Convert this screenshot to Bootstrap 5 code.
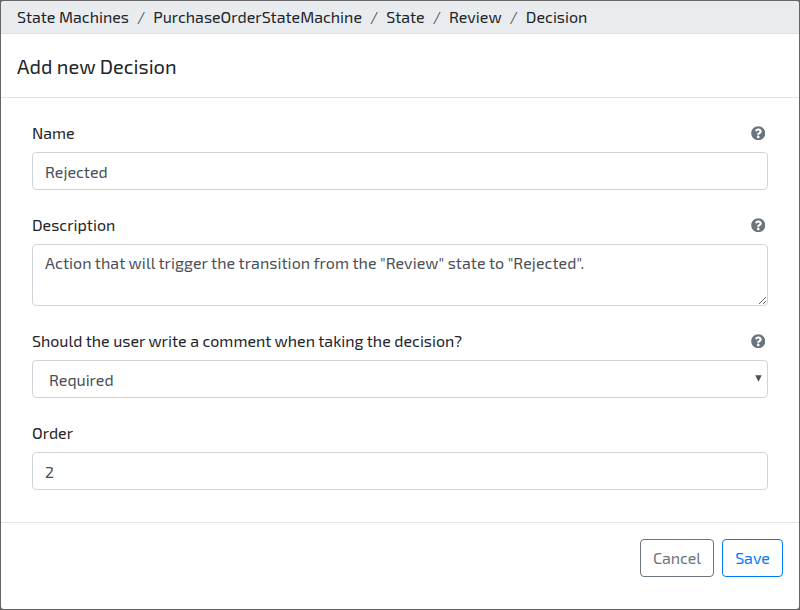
<!DOCTYPE html>
<html lang="en">
<head>
<meta charset="utf-8">
<meta name="viewport" content="width=device-width, initial-scale=1">
<title>Add new Decision</title>
<link rel="stylesheet" href="https://cdn.jsdelivr.net/npm/bootstrap@5.3.0/dist/css/bootstrap.min.css">
<style>
body { font-family: "Exo 2", Roboto, sans-serif; color: #212529; background: #666; }
.dialog-panel { width: 798px; height: 608px; margin: 1px; border-radius: 3px; }
.trail { height: 33px; --bs-breadcrumb-divider-color: #6c757d; background: #e9ecef; border-bottom: 1px solid #dee2e6; line-height: 32px; }
.dialog-title { height: 64px; font-size: 20px; line-height: 30px; padding-top: 17px; border-bottom: 1px solid #dee2e6; }
.form-area { padding: 23px 31px 31px; height: 424px; }
.field { margin-bottom: 22px; }
.field-head { height: 24px; margin-bottom: 7px; padding-right: 3px; }
.field + .field { margin-top: 23px; }
.field { margin-bottom: 0; }
.form-control, .choice { border-color: #ced4da; border-radius: 4px; color: #495057; height: 38px; }
.form-control { padding: 6px 12px; }
textarea.form-control { height: 62px; min-height: 62px; letter-spacing: .05px; display: block; }
.choice { padding: 7px 12px 5px 16px; background: none; }
.choice-wrap svg { position: absolute; right: 6.5px; top: 15px; pointer-events: none; }
.actions { border-top: 1px solid #e5e5e5; padding: 16px; }
.actions .btn { height: 38px; border-radius: 4px; padding: 6px 0; }
.btn-quit { width: 74px; color: #6c757d; border-color: #6c757d; }
.btn-keep { width: 61px; color: #007bff; border-color: #007bff; }
</style>
</head>
<body>
<svg class="d-none">
  <symbol id="help" viewBox="0 0 512 512"><path fill="#6c757d" d="M504 256c0 136.997-111.043 248-248 248S8 392.997 8 256C8 119.083 119.043 8 256 8s248 111.083 248 248zM262.655 90c-54.497 0-89.255 22.957-116.549 63.758-3.536 5.286-2.353 12.415 2.715 16.258l34.699 26.31c5.205 3.947 12.621 3.008 16.665-2.122 17.864-22.658 30.113-35.797 57.303-35.797 20.429 0 45.698 13.148 45.698 32.958 0 14.976-12.363 22.667-32.534 33.976C247.128 238.528 216 254.941 216 296v4c0 6.627 5.373 12 12 12h56c6.627 0 12-5.373 12-12v-1.333c0-28.462 83.186-29.647 83.186-106.667 0-58.002-60.165-102-116.531-102zM256 338c-25.365 0-46 20.635-46 46 0 25.364 20.635 46 46 46s46-20.636 46-46c0-25.365-20.635-46-46-46z"/></symbol>
</svg>
<main class="dialog-panel bg-white overflow-hidden d-flex flex-column">
  <nav class="trail px-3" aria-label="breadcrumb">
    <ol class="breadcrumb mb-0 flex-nowrap text-nowrap">
      <li class="breadcrumb-item">State Machines</li>
      <li class="breadcrumb-item">PurchaseOrderStateMachine</li>
      <li class="breadcrumb-item">State</li>
      <li class="breadcrumb-item">Review</li>
      <li class="breadcrumb-item">Decision</li>
    </ol>
  </nav>
  <h1 class="dialog-title px-3 mb-0 fw-normal">Add new Decision</h1>
  <form class="form-area">
    <div class="field">
      <div class="field-head d-flex justify-content-between align-items-center"><label for="name">Name</label><svg width="14.5" height="14.5"><use href="#help"/></svg></div>
      <input id="name" class="form-control" value="Rejected">
    </div>
    <div class="field">
      <div class="field-head d-flex justify-content-between align-items-center"><label for="desc">Description</label><svg width="14.5" height="14.5"><use href="#help"/></svg></div>
      <textarea id="desc" class="form-control">Action that will trigger the transition from the "Review" state to "Rejected".</textarea>
    </div>
    <div class="field">
      <div class="field-head d-flex justify-content-between align-items-center"><label for="comment">Should the user write a comment when taking the decision?</label><svg width="14.5" height="14.5"><use href="#help"/></svg></div>
      <div class="choice-wrap position-relative"><select id="comment" class="form-select choice"><option>Required</option></select><svg width="7" height="7"><path d="M.3.3h6.4L3.5 6.7z" fill="#495057"/></svg></div>
    </div>
    <div class="field">
      <div class="field-head d-flex align-items-center"><label for="order">Order</label></div>
      <input id="order" class="form-control" value="2">
    </div>
  </form>
  <footer class="actions d-flex justify-content-end gap-2 flex-grow-1 align-items-start">
    <button type="button" class="btn btn-quit">Cancel</button>
    <button type="button" class="btn btn-keep">Save</button>
  </footer>
</main>
<script src="https://cdn.jsdelivr.net/npm/bootstrap@5.3.0/dist/js/bootstrap.bundle.min.js"></script>
</body>
</html>
